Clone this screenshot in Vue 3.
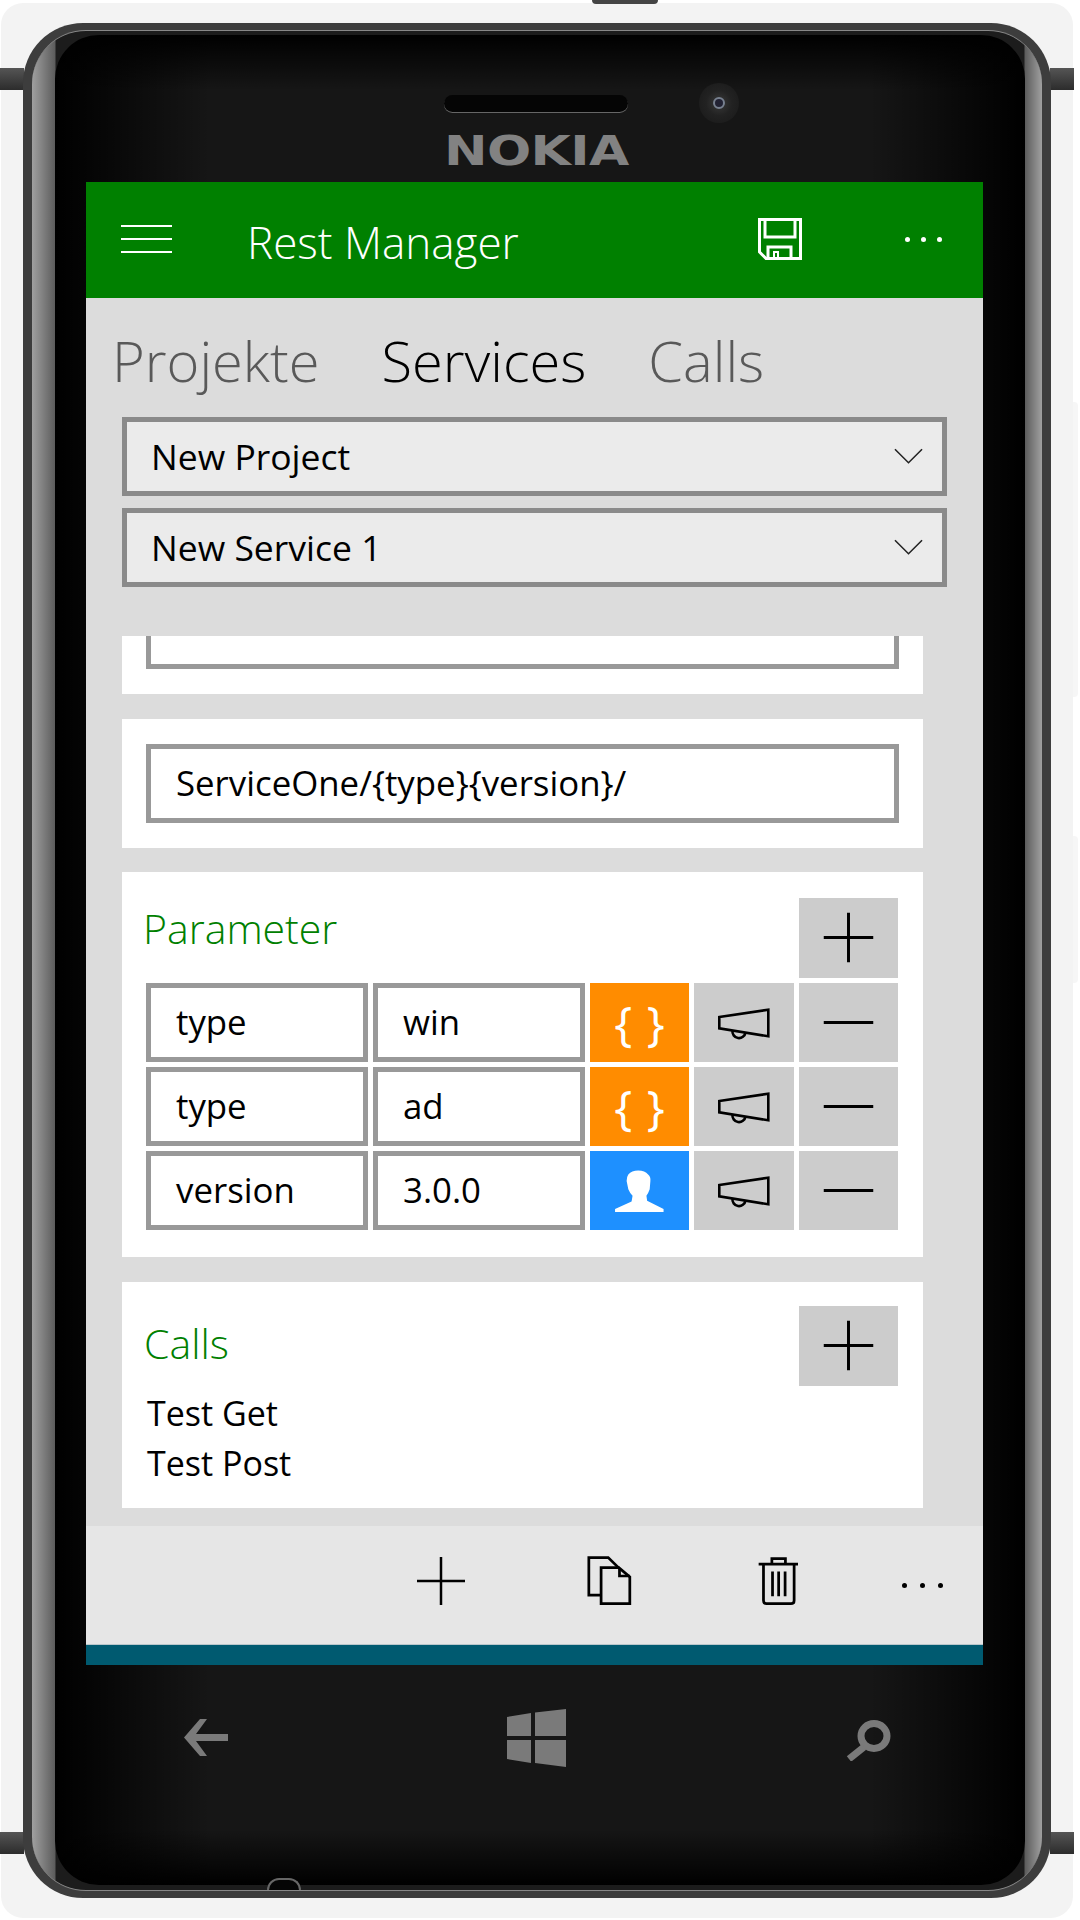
<template>
  <div class="phone">
    <span class="side-tab tab-tl" />
    <span class="side-tab tab-tr" />
    <span class="side-tab tab-bl" />
    <span class="side-tab tab-br" />
    <span class="edge-btn btn-one" />
    <span class="edge-btn btn-two" />
    <span class="top-notch" />
    <div class="bezel">
      <span class="bottom-notch" />
      <div class="metal">
        <div class="glass">
          <span class="speaker" />
          <span class="camera"><i /></span>
          <span class="logo">NOKIA</span>

          <main class="screen">
            <header class="app-bar">
              <span class="burger"><i /><i /><i /></span>
              <h1>Rest Manager</h1>
              <svg class="save" viewBox="0 0 44 42" fill="none" stroke="#fff" stroke-width="3">
                <path d="M1.5 1.5H42.5V40.5H8L1.5 34Z" />
                <path d="M7 1.5V19H37V1.5" />
                <path d="M10 40V29H33V40" />
                <path d="M16 40V34H20V40" stroke-width="2" />
              </svg>
              <span class="dots light"><i /><i /><i /></span>
            </header>

            <nav class="tabs">
              <span v-for="tab in tabs" :key="tab" :class="{ active: tab === 'Services' }">{{ tab }}</span>
            </nav>

            <div class="selects">
              <div v-for="item in selects" :key="item" class="select">
                <span>{{ item }}</span>
                <svg viewBox="0 0 30 16" fill="none" stroke="#222" stroke-width="1.6">
                  <path d="M1 1L15 15L29 1" />
                </svg>
              </div>
            </div>

            <div class="scroll">
              <section class="card clipped">
                <div class="field" />
              </section>

              <section class="card route">
                <div class="field">ServiceOne/{type}{version}/</div>
              </section>

              <section class="card params">
                <div class="card-head">
                  <h2>Parameter</h2>
                  <button class="square">
                    <svg viewBox="0 0 100 80" stroke="#000" stroke-width="3"><path d="M25 40H75M50 15V65" /></svg>
                  </button>
                </div>
                <div class="param-grid">
                  <template v-for="row in params" :key="row.name + row.value">
                    <div class="field">{{ row.name }}</div>
                    <div class="field">{{ row.value }}</div>
                    <div class="square" :class="row.kind">
                      <span v-if="row.kind === 'url'" class="braces">{ }</span>
                      <svg v-else viewBox="0 0 100 78" fill="#fff">
                        <path d="M38.7 22.7Q42 18.7 48.7 18.7Q55.5 18.7 58.7 22.7Q61.5 25 61 29.3L60.3 37.7Q59 41.5 57 44.3L57.7 49.3L74.3 57.7V60.7H25.3V57.7L42 50L43 44.3Q40 41 38.7 37.7L37 29.3Q37 25 38.7 22.7Z" />
                      </svg>
                    </div>
                    <div class="square">
                      <svg viewBox="0 0 100 78" fill="none" stroke="#000" stroke-width="2.6">
                        <path d="M25.3 33L74.3 25.7V52.3L25.3 44.3Z" />
                        <path d="M38.5 46.5A6.5 6.5 0 0 0 51.5 48.5" />
                      </svg>
                    </div>
                    <div class="square">
                      <svg viewBox="0 0 100 78" stroke="#000" stroke-width="3"><path d="M25 39H75" /></svg>
                    </div>
                  </template>
                </div>
              </section>

              <section class="card calls">
                <div class="card-head">
                  <h2>Calls</h2>
                  <button class="square">
                    <svg viewBox="0 0 100 80" stroke="#000" stroke-width="3"><path d="M25 40H75M50 15V65" /></svg>
                  </button>
                </div>
                <p v-for="call in calls" :key="call">{{ call }}</p>
              </section>
            </div>

            <footer class="command-bar">
              <span class="slot">
                <svg class="bar-icon" viewBox="0 0 50 50" stroke="#000" stroke-width="2.6"><path d="M0 25H50M25 0V50" /></svg>
              </span>
              <span class="slot">
                <svg class="bar-icon" viewBox="30 30 145 155" fill="none" stroke="#000" stroke-width="8.5">
                  <path d="M76 151H40V35H100L132 66" />
                  <path d="M78 66H133L167 95V178H78Z" />
                  <path d="M135 68V92H167" />
                </svg>
              </span>
              <span class="slot">
                <svg class="bar-icon" viewBox="540 30 130 155" fill="none" stroke="#000" stroke-width="8.5">
                  <path d="M545 55H667M586 53V38H628V53" />
                  <path d="M560 55V168Q560 178 570 178H645Q655 178 655 168V55" />
                  <path d="M588 78V155M607 78V155M627 78V155" />
                </svg>
              </span>
              <span class="slot last"><span class="dots"><i /><i /><i /></span></span>
            </footer>
            <div class="status-strip" />
          </main>

          <div class="hw-keys">
            <svg class="key-back" viewBox="0 0 44 37" fill="#7a7a7a">
              <path d="M16 0H23L12 15H44V22H12L23 37H16L0 18.5Z" />
            </svg>
            <svg class="key-win" viewBox="0 0 59 58" fill="#7a7a7a">
              <path d="M0 8L24 4V27H0ZM28 3.500L59 0V27H28ZM0 31H24V54L0 50ZM28 31H59V58L28 54Z" />
            </svg>
            <svg class="key-search" viewBox="0 0 47 41" fill="none" stroke="#7a7a7a">
              <ellipse cx="29" cy="16" rx="13" ry="12.500" stroke-width="7" />
              <path d="M19 27L4 39" stroke-width="7" />
            </svg>
          </div>
        </div>
      </div>
    </div>
  </div>
</template>

<script setup>
const tabs = ['Projekte', 'Services', 'Calls']
const selects = ['New Project', 'New Service 1']
const params = [
  { name: 'type', value: 'win', kind: 'url' },
  { name: 'type', value: 'ad', kind: 'url' },
  { name: 'version', value: '3.0.0', kind: 'user' }
]
const calls = ['Test Get', 'Test Post']
</script>

<style>
html,
body {
  margin: 0;
  background: #fff;
}
</style>

<style scoped>
.phone {
  position: relative;
  box-sizing: border-box;
  width: 1072px;
  height: 1915px;
  margin: 3px 0 0 1px;
  padding: 20px 22px;
  border-radius: 22px;
  background: #f3f3f3;
  font-family: "Open Sans", "Liberation Sans", sans-serif;
}

.side-tab {
  position: absolute;
  width: 24px;
  height: 22px;
  background: linear-gradient(#555, #2c2c2c);
}

.tab-tl { left: -1px; top: 65px; }
.tab-tr { right: -1px; top: 65px; }
.tab-bl { left: -1px; top: 1829px; }
.tab-br { right: -1px; top: 1829px; }

.edge-btn {
  position: absolute;
  right: -5px;
  width: 5px;
  border-radius: 0 4px 4px 0;
  background: #f6f6f6;
}

.btn-one { top: 399px; height: 295px; }
.btn-two { top: 833px; height: 147px; }

.top-notch {
  position: absolute;
  left: 591px;
  top: -3px;
  width: 66px;
  height: 4px;
  border-radius: 0 0 8px 8px;
  background: #444;
}

.bezel {
  position: relative;
  box-sizing: border-box;
  height: 1875px;
  padding: 7px 9px;
  border-radius: 60px;
  background: #3d3d3d;
}

.bottom-notch {
  position: absolute;
  left: 244px;
  bottom: 8px;
  z-index: 2;
  width: 34px;
  height: 12px;
  border-radius: 12px 12px 0 0;
  background: #050505;
  border: 2px solid #666;
  border-bottom: 0;
  box-sizing: border-box;
}

.metal {
  box-sizing: border-box;
  height: 100%;
  padding: 4px 17px 5px 23px;
  border-top: 1px solid #888;
  border-bottom: 1px solid #888;
  border-radius: 54px;
  background: linear-gradient(90deg, #a0a0a0, #5c5c5c 23px, #1c1c1c 24px, #1c1c1c calc(100% - 18px), #5c5c5c calc(100% - 17px), #a0a0a0);
}

.glass {
  position: relative;
  box-sizing: border-box;
  height: 100%;
  padding: 147px 42px 0 31px;
  border-radius: 44px;
  background:
    linear-gradient(transparent 97%, #000),
    linear-gradient(#000, transparent 3%),
    linear-gradient(90deg, #000, transparent 16%, transparent 84%, #000),
    #161616;
}

.speaker {
  position: absolute;
  left: 389px;
  top: 60px;
  width: 184px;
  height: 17px;
  border-radius: 9px;
  background: #050505;
  box-shadow: 0 1px 0 #666;
}

.camera {
  position: absolute;
  left: 644px;
  top: 48px;
  display: flex;
  align-items: center;
  justify-content: center;
  width: 40px;
  height: 40px;
  border-radius: 50%;
  background: radial-gradient(circle, #3a3a3a, #222 45%, #181818 100%);
}

.camera i {
  width: 8px;
  height: 8px;
  border-radius: 50%;
  background: #223;
  border: 2px solid #77808f;
}

.logo {
  position: absolute;
  left: 389px;
  top: 93px;
  width: 148px;
  color: #828282;
  font-family: "DejaVu Sans", sans-serif;
  font-size: 41px;
  font-weight: 700;
  line-height: 46px;
  letter-spacing: -0.5px;
  transform: scaleX(1.27);
  transform-origin: left top;
}

.screen {
  display: flex;
  flex-direction: column;
  height: 1483px;
  background: #dcdcdc;
}

.app-bar {
  display: flex;
  flex: 0 0 116px;
  align-items: center;
  padding-left: 35px;
  background: #008000;
  color: #fff;
}

.burger {
  display: flex;
  flex-direction: column;
  gap: 10.500px;
  width: 51px;
  margin-top: -2px;
}

.burger i {
  height: 2.500px;
  background: #fff;
}

h1 {
  flex: 1;
  margin: 3px 0 0 75px;
  font-size: 44px;
  font-weight: 300;
}

.save {
  width: 44px;
  height: 42px;
  margin: -3px 0 0;
}

.dots {
  display: flex;
  gap: 13px;
}

.dots i {
  width: 5px;
  height: 5px;
  border-radius: 50%;
  background: #000;
}

.dots.light {
  gap: 11px;
  margin: -2px 41px 0 103px;
}

.dots.light i {
  background: #fff;
}

.tabs {
  display: flex;
  flex: 0 0 119px;
  gap: 62px;
  align-items: flex-start;
  padding: 24px 0 0 26px;
  box-sizing: border-box;
  color: #595959;
  font-size: 56px;
  font-weight: 300;
  line-height: 76px;
}

.tabs .active {
  color: #000;
}

.selects {
  display: flex;
  flex: 0 0 219px;
  flex-direction: column;
  gap: 12px;
  padding: 0 36px;
  box-sizing: border-box;
}

.select {
  display: flex;
  flex: 0 0 79px;
  align-items: center;
  justify-content: space-between;
  box-sizing: border-box;
  padding: 0 19px 2px 24px;
  border: 5px solid #8a8a8a;
  background: #ebebeb;
  color: #000;
  font-size: 35.500px;
}

.select svg {
  width: 29px;
  height: 16px;
}

.scroll {
  display: flex;
  flex: 1;
  flex-direction: column;
  gap: 24.500px;
  padding: 0 60px 0 36px;
  overflow: hidden;
}

.card {
  flex: none;
  box-sizing: border-box;
  padding: 25px 24px;
  background: #fff;
}

.field {
  display: flex;
  align-items: center;
  box-sizing: border-box;
  height: 79px;
  padding: 0 0 2px 25px;
  border: 5px solid #999;
  background: #fff;
  color: #000;
  font-size: 34.800px;
}

.clipped {
  display: flex;
  flex-direction: column;
  justify-content: flex-end;
  height: 58px;
  padding-top: 0;
  overflow: hidden;
}

.clipped .field {
  flex: none;
}

.params {
  height: 385px;
  padding-top: 26px;
}

.card-head {
  display: flex;
  align-items: center;
  justify-content: space-between;
  height: 80px;
  margin-bottom: 5px;
  padding-right: 1px;
}

h2 {
  margin: 0 0 20px -3px;
  color: #008000;
  font-size: 41px;
  font-weight: 300;
}

.calls h2 {
  margin-bottom: 5px;
  margin-left: -2px;
}

.square {
  display: flex;
  align-items: center;
  justify-content: center;
  width: 99px;
  height: 80px;
  padding: 0;
  border: 0;
  background: #ccc;
}

.square svg {
  display: block;
  width: 100%;
}

.param-grid {
  display: grid;
  grid-template-columns: 222px 212px 99px 100px 99px;
  grid-auto-rows: 79px;
  gap: 5px;
}

.param-grid .square {
  width: auto;
  height: auto;
}

.url {
  background: #ff8c00;
}

.user {
  background: #1e90ff;
}

.braces {
  color: #fff;
  font-size: 48px;
  font-weight: 400;
  line-height: 1;
  word-spacing: 2px;
}

.calls {
  height: 226px;
  padding-top: 24px;
}

.calls .card-head {
  margin-bottom: 2px;
}

.calls p {
  margin: 0 0 0 1px;
  color: #000;
  font-size: 34px;
  line-height: 50px;
}

.command-bar {
  display: grid;
  flex: 0 0 118px;
  grid-template-columns: 270px 169px 168px 169px 121px;
  background: #e6e6e6;
}

.slot {
  display: flex;
  align-items: center;
  justify-content: center;
  margin-top: -9px;
}

.slot:first-child {
  grid-column: 2;
}

.slot.last {
  margin-top: 0;
}

.bar-icon {
  width: 48px;
  height: 50px;
}

.status-strip {
  flex: 0 0 21px;
  border-top: 1px solid #b9c6cb;
  box-sizing: border-box;
  background: #005a70;
}

.key-back,
.key-win,
.key-search {
  position: absolute;
}

.key-back { left: 129px; top: 1684px; width: 44px; height: 37px; }
.key-win { left: 452px; top: 1674px; width: 59px; height: 58px; }
.key-search { left: 790px; top: 1685px; width: 47px; height: 41px; }
</style>
